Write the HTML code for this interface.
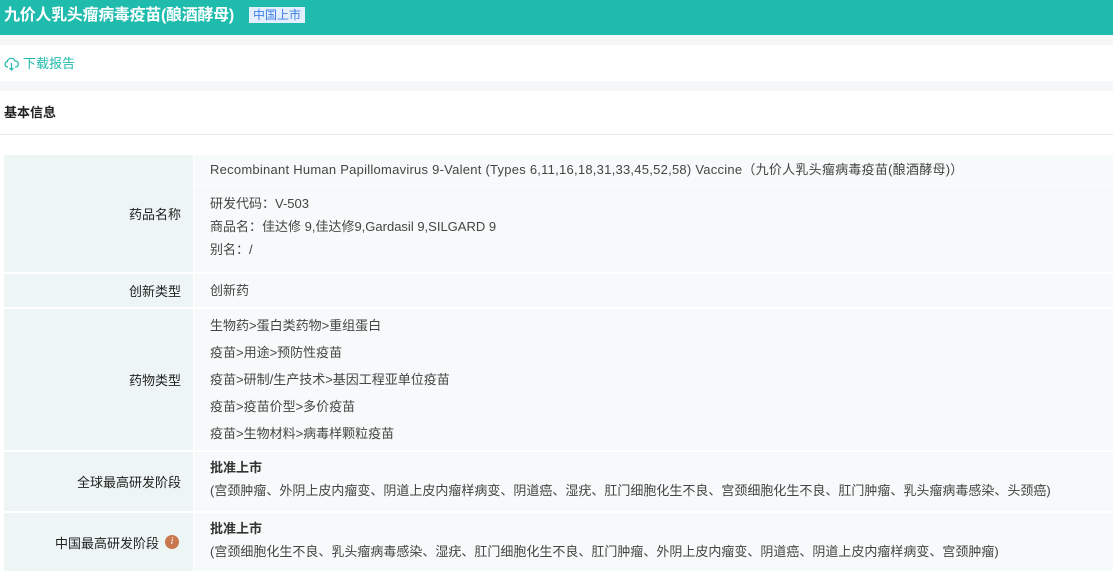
<!DOCTYPE html>
<html><head><meta charset="utf-8"><style>
*{margin:0;padding:0;box-sizing:border-box}
body{width:1113px;height:571px;overflow:hidden;background:#fff;font-family:"Liberation Sans","Noto Sans CJK SC",sans-serif;color:#333;font-size:13px;position:relative}
.a{position:absolute;white-space:nowrap}
.l{position:absolute;left:4px;width:189px;background:#eef5f5;text-align:right;padding-right:12px;display:flex;align-items:center;justify-content:flex-end;font-size:13px;color:#222}
.r{position:absolute;left:194px;right:0;background:#f7fafa}
.t{position:absolute;left:210px;white-space:nowrap;color:#444;line-height:16px}
</style></head><body>
<div class="a" style="left:0;top:0;width:1113px;height:35px;background:#1fbbad"></div>
<div class="a" style="left:4px;top:5px;color:#fff;font-size:16px;font-weight:bold;line-height:22px;letter-spacing:-0.3px">九价人乳头瘤病毒疫苗(酿酒酵母)</div>
<div class="a" style="left:249px;top:7px;height:16px;padding:0 4px;background:#e3efff;color:#3d7ee8;font-size:12px;line-height:16px">中国上市</div>
<div class="a" style="left:0;top:35px;width:1113px;height:10px;background:#f5f6f8"></div>
<svg class="a" style="left:4px;top:57px" width="15" height="14" viewBox="0 0 15 14"><path d="M4 10H3.5A2.8 2.8 0 0 1 3.3 4.5 4 4 0 0 1 11 4a3 3 0 0 1 .8 6H11" fill="none" stroke="#1fbbad" stroke-width="1.2"/><path d="M7.5 6v7M5.5 11l2 2 2-2" fill="none" stroke="#1fbbad" stroke-width="1.2"/></svg>
<div class="a" style="left:23px;top:55px;color:#1fbbad;font-size:13px;line-height:18px">下载报告</div>
<div class="a" style="left:0;top:81px;width:1113px;height:10px;background:#f5f6f8"></div>
<div class="a" style="left:4px;top:104px;font-weight:bold;font-size:13px;color:#222;line-height:18px">基本信息</div>
<div class="a" style="left:0;top:134px;width:1113px;height:1px;background:#e8e8e8"></div>

<div class="l" style="top:155px;height:117px">药品名称</div>
<div class="r" style="top:155px;height:117px"></div>
<div class="a" style="left:194px;top:185px;width:919px;height:1px;background:#fff"></div>
<div class="t" style="top:162px;letter-spacing:0.25px">Recombinant Human Papillomavirus 9-Valent (Types 6,11,16,18,31,33,45,52,58) Vaccine（九价人乳头瘤病毒疫苗(酿酒酵母)）</div>
<div class="t" style="top:196px">研发代码：V-503</div>
<div class="t" style="top:219px">商品名：佳达修 9,佳达修9,Gardasil 9,SILGARD 9</div>
<div class="t" style="top:242px">别名：/</div>

<div class="l" style="top:274px;height:33px">创新类型</div>
<div class="r" style="top:274px;height:33px"></div>
<div class="t" style="top:283px">创新药</div>

<div class="l" style="top:309px;height:141px">药物类型</div>
<div class="r" style="top:309px;height:141px"></div>
<div class="t" style="top:318px">生物药&gt;蛋白类药物&gt;重组蛋白</div>
<div class="t" style="top:345px">疫苗&gt;用途&gt;预防性疫苗</div>
<div class="t" style="top:372px">疫苗&gt;研制/生产技术&gt;基因工程亚单位疫苗</div>
<div class="t" style="top:399px">疫苗&gt;疫苗价型&gt;多价疫苗</div>
<div class="t" style="top:426px">疫苗&gt;生物材料&gt;病毒样颗粒疫苗</div>

<div class="l" style="top:452px;height:59px">全球最高研发阶段</div>
<div class="r" style="top:452px;height:59px"></div>
<div class="t" style="top:460px;font-weight:bold;color:#333">批准上市</div>
<div class="t" style="top:483px">(宫颈肿瘤、外阴上皮内瘤变、阴道上皮内瘤样病变、阴道癌、湿疣、肛门细胞化生不良、宫颈细胞化生不良、肛门肿瘤、乳头瘤病毒感染、头颈癌)</div>

<div class="l" style="top:513px;height:58px;padding-right:14px">中国最高研发阶段<span style="display:inline-block;width:14px;height:14px;border-radius:50%;background:#c8774f;color:#fff;font-size:10px;font-style:italic;text-align:center;line-height:14px;margin-left:6px;font-family:'Liberation Serif',serif">i</span></div>
<div class="r" style="top:513px;height:58px"></div>
<div class="t" style="top:521px;font-weight:bold;color:#333">批准上市</div>
<div class="t" style="top:544px">(宫颈细胞化生不良、乳头瘤病毒感染、湿疣、肛门细胞化生不良、肛门肿瘤、外阴上皮内瘤变、阴道癌、阴道上皮内瘤样病变、宫颈肿瘤)</div>
</body></html>
